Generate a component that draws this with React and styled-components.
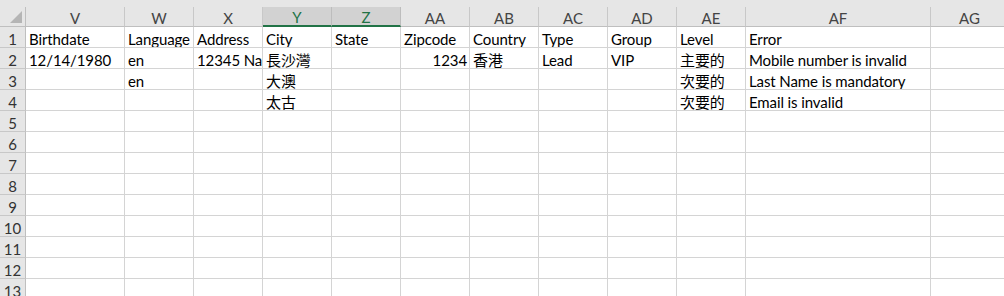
import React from 'react';
import styled, { createGlobalStyle } from 'styled-components';

const GlobalStyle = createGlobalStyle`
  html, body {
    margin: 0;
    padding: 0;
    background: #ffffff;
    overflow: hidden;
  }
  body {
    font-family: Lato, "Noto Sans CJK TC", sans-serif;
  }
`;

const COLS = [
  { name: 'V', width: 99 },
  { name: 'W', width: 69 },
  { name: 'X', width: 69 },
  { name: 'Y', width: 69, selected: true },
  { name: 'Z', width: 69, selected: true },
  { name: 'AA', width: 69 },
  { name: 'AB', width: 69 },
  { name: 'AC', width: 69 },
  { name: 'AD', width: 69 },
  { name: 'AE', width: 69 },
  { name: 'AF', width: 185 },
  { name: 'AG', width: 78 },
];

const TEMPLATE = `26px ${COLS.map(c => c.width + 'px').join(' ')}`;

const ROWS = [
  ['Birthdate', 'Language', 'Address', 'City', 'State', 'Zipcode', 'Country', 'Type', 'Group', 'Level', 'Error'],
  ['12/14/1980', 'en', '12345 Nathan Road', '長沙灣', '', { v: '1234', right: true }, '香港', 'Lead', 'VIP', '主要的', 'Mobile number is invalid'],
  ['', 'en', '', '大澳', '', '', '', '', '', '次要的', 'Last Name is mandatory'],
  ['', '', '', '太古', '', '', '', '', '', '次要的', 'Email is invalid'],
];

const Sheet = styled.div`
  width: 1004px;
  height: 296px;
  overflow: hidden;
  background: #ffffff;
`;

const TopStrip = styled.div`
  height: 7px;
  background: #e6e6e6;
`;

const Row = styled.div`
  display: grid;
  grid-template-columns: ${TEMPLATE};
  height: ${p => (p.$head ? 20 : 21)}px;
`;

const Corner = styled.div`
  position: relative;
  background: #e6e6e6;
  border-right: 1px solid #bfbfbf;
  border-bottom: 1px solid #bfbfbf;
  &::after {
    content: '';
    position: absolute;
    right: 3px;
    bottom: 3px;
    width: 0;
    height: 0;
    border-left: 12px solid transparent;
    border-bottom: 12px solid #b5b5b5;
  }
`;

const ColHead = styled.div`
  display: flex;
  align-items: flex-end;
  justify-content: center;
  box-sizing: border-box;
  background: ${p => (p.$selected ? '#d2d2d2' : '#e6e6e6')};
  color: ${p => (p.$selected ? '#217346' : '#444444')};
  border-right: 1px solid ${p => (p.$selected ? '#bdbdbd' : '#c8c8c8')};
  border-bottom: ${p => (p.$selected ? '2px solid #217346' : '1px solid #bfbfbf')};
  font-size: 15px;
  line-height: ${p => (p.$selected ? 15 : 16)}px;
`;

const RowHead = styled.div`
  display: flex;
  align-items: flex-end;
  justify-content: center;
  box-sizing: border-box;
  background: #e6e6e6;
  color: #333333;
  border-right: 1px solid #bfbfbf;
  border-bottom: 1px solid #c8c8c8;
  font-size: 15px;
  line-height: 16px;
`;

const Cell = styled.div`
  display: flex;
  align-items: flex-end;
  justify-content: ${p => (p.$right ? 'flex-end' : 'flex-start')};
  padding: 0 2px 0 3px;
  box-sizing: border-box;
  overflow: hidden;
  white-space: nowrap;
  color: #000000;
  border-right: 1px solid #d4d4d4;
  border-bottom: 1px solid #d4d4d4;
  font-size: 15px;
  letter-spacing: -0.1px;
  line-height: 16px;
`;

export default function App() {
  const rowCount = 13;
  const rows = [];
  for (let r = 0; r < rowCount; r++) {
    const data = ROWS[r] || [];
    rows.push(
      <Row key={r}>
        <RowHead>{r + 1}</RowHead>
        {COLS.map((c, i) => {
          const val = data[i];
          const obj = val && typeof val === 'object' ? val : { v: val || '' };
          return (
            <Cell key={c.name} $right={obj.right}>
              {obj.v}
            </Cell>
          );
        })}
      </Row>
    );
  }

  return (
    <Sheet>
      <GlobalStyle />
      <TopStrip />
      <Row $head>
        <Corner />
        {COLS.map(c => (
          <ColHead key={c.name} $selected={c.selected}>{c.name}</ColHead>
        ))}
      </Row>
      {rows}
    </Sheet>
  );
}
